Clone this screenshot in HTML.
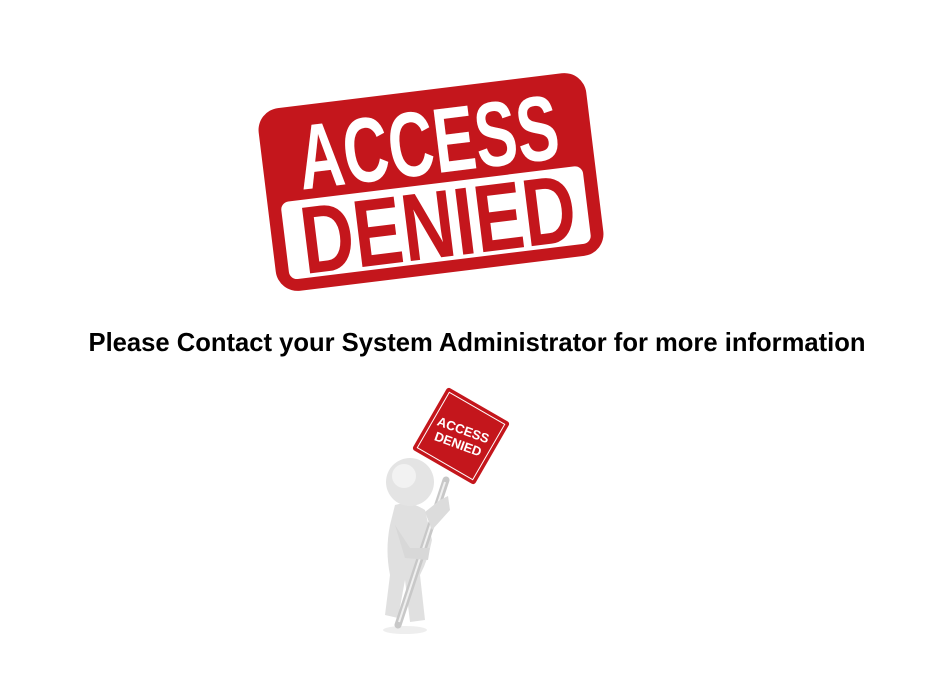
<!DOCTYPE html>
<html><head><meta charset="utf-8"><style>
html,body{margin:0;padding:0;background:#fff;width:926px;height:694px;overflow:hidden}
.t{position:absolute;left:0;width:954px;top:329px;text-align:center;font:bold 25.6px "Liberation Sans",sans-serif;color:#000}
svg{position:absolute;left:0;top:0}
</style></head><body>
<svg width="926" height="694" viewBox="0 0 926 694">
<g transform="translate(431,182) rotate(-7)">
<rect x="-165" y="-92" width="330" height="184" rx="22" fill="#c4161c"/>
<rect x="-152" y="2" width="304" height="78" rx="8" fill="#fff"/>
<text x="2" y="-8" text-anchor="middle" font-family="Liberation Sans,sans-serif" font-weight="bold" font-size="92" fill="#fff" textLength="262" lengthAdjust="spacingAndGlyphs">ACCESS</text>
<text x="2" y="76" text-anchor="middle" font-family="Liberation Sans,sans-serif" font-weight="bold" font-size="96" fill="#c4161c" textLength="276" lengthAdjust="spacingAndGlyphs">DENIED</text>
</g>
<ellipse cx="405" cy="630" rx="22" ry="4" fill="#eee"/>
<path d="M395 505 Q410 500 425 510 L432 540 Q428 560 420 575 L425 620 L410 622 L405 580 L398 618 L385 615 L390 575 Q385 550 390 525 Z" fill="#e0e0e0"/>
<circle cx="410" cy="482" r="24" fill="#e4e4e4"/>
<circle cx="404" cy="476" r="12" fill="#f2f2f2"/>
<line x1="446" y1="480" x2="398" y2="625" stroke="#c8c8c8" stroke-width="7" stroke-linecap="round"/>
<line x1="445" y1="482" x2="399" y2="622" stroke="#f0f0f0" stroke-width="2"/>
<path d="M425 512 L440 500 L448 496 L450 510 L432 530 Z" fill="#dcdcdc"/>
<path d="M395 525 L410 548 L430 548 L428 560 L405 558 Z" fill="#d8d8d8"/>
<g transform="translate(461,436) rotate(30)">
<rect x="-36" y="-36" width="72" height="72" rx="3" fill="#c4161c"/>
<rect x="-32" y="-32" width="64" height="64" fill="none" stroke="#fff" stroke-width="1"/>
<g transform="rotate(-10)">
<text x="0" y="-2" text-anchor="middle" font-family="Liberation Sans,sans-serif" font-weight="bold" font-size="13" fill="#fff">ACCESS</text>
<text x="0" y="13" text-anchor="middle" font-family="Liberation Sans,sans-serif" font-weight="bold" font-size="13" fill="#fff">DENIED</text>
</g>
</g>
</svg>
<div class="t">Please Contact your System Administrator for more information</div>
</body></html>
